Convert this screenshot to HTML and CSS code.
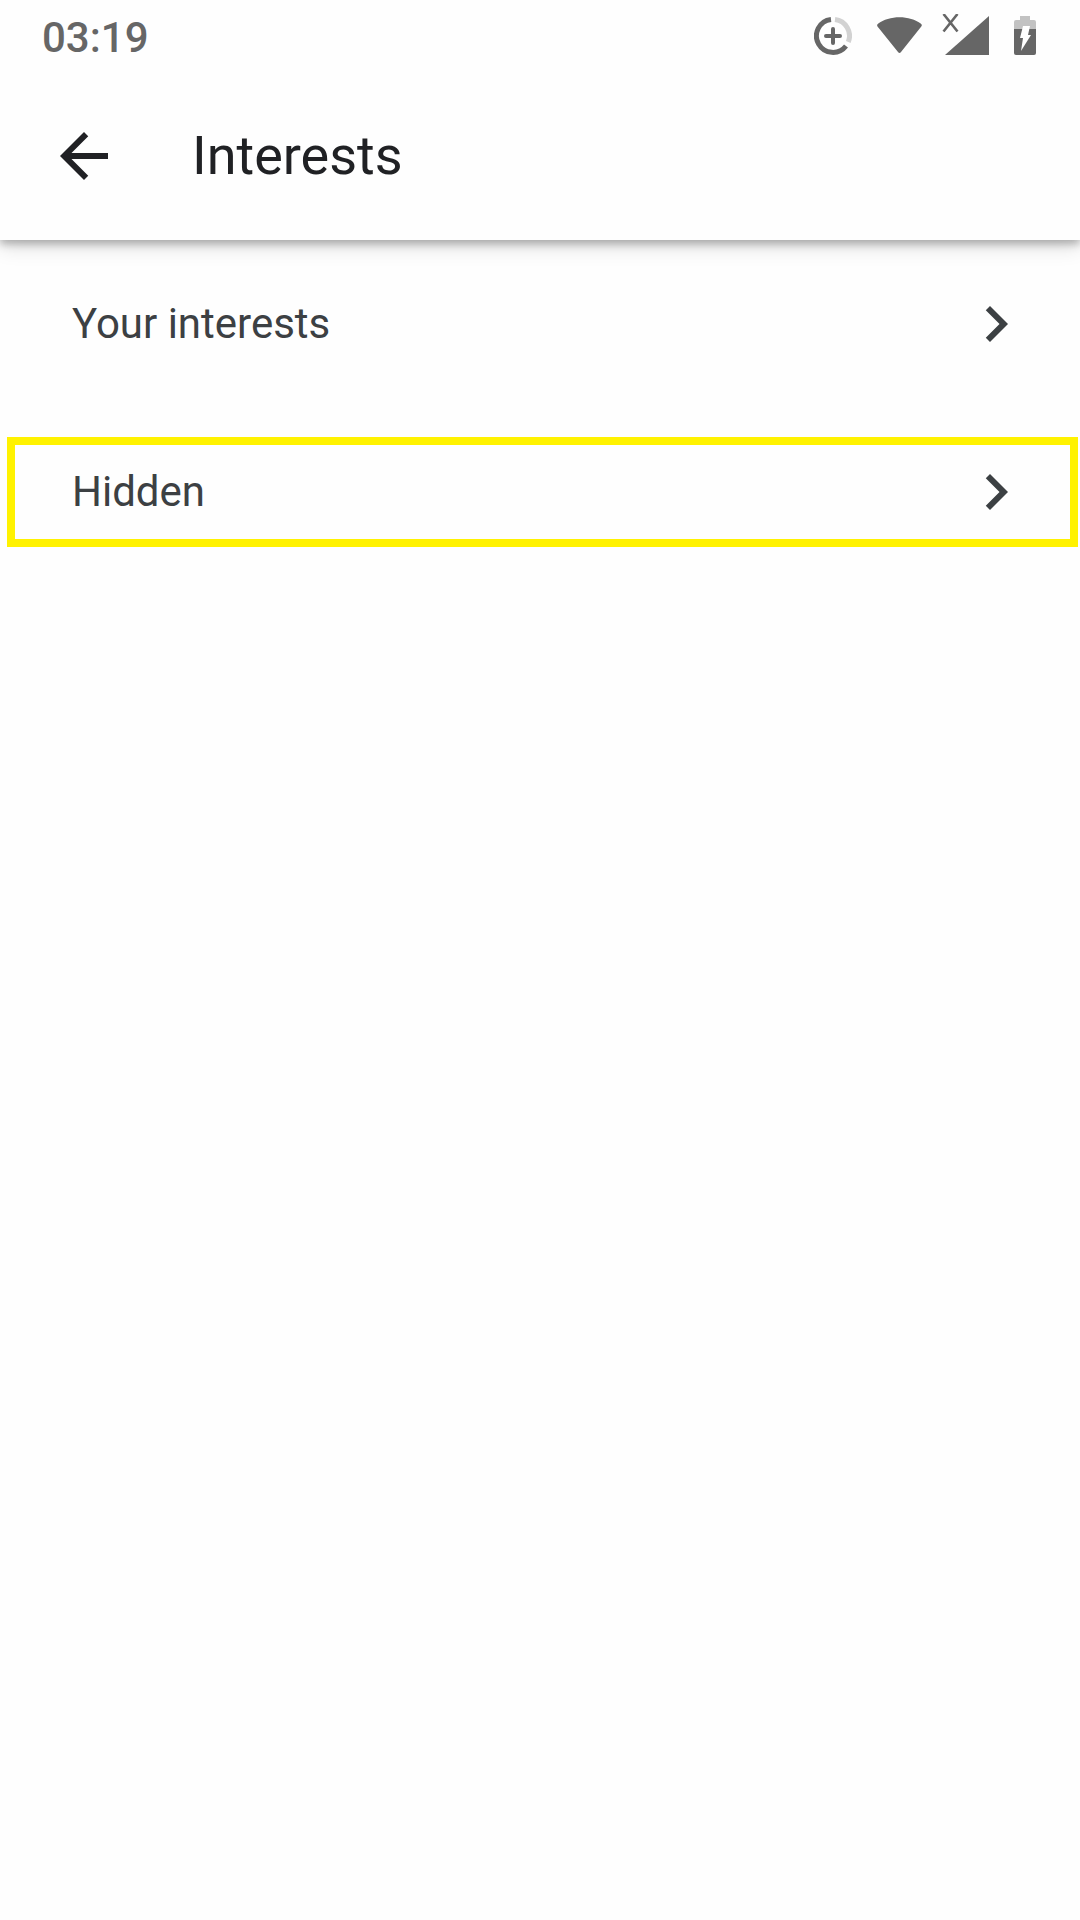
FILE: index.html
```html
<!DOCTYPE html>
<html lang="en">
<head>
<meta charset="utf-8">
<meta name="viewport" content="width=device-width">
<title>Interests</title>
<link rel="stylesheet" href="styles.css">
</head>
<body>
<header class="header">
 <div class="status">
  <span class="time">03:19</span>
  <div class="icons">
   <!-- data saver -->
   <svg width="38" height="44" viewBox="0 0 38 44" fill="none">
    <path d="M21 5.500A16.500 16.500 0 0 1 34.300 28" stroke="#d2d2d2" stroke-width="5"/>
    <path d="M17 5.500A16.500 16.500 0 1 0 32 32" stroke="#666" stroke-width="5"/>
    <path d="M19 15v14M12 22h14" stroke="#666" stroke-width="4" stroke-linecap="round"/>
   </svg>
   <!-- wifi -->
   <svg width="50" height="44" viewBox="0 0 50 44">
    <path d="M5.500 12.500Q4.500 11 6 9.800C17 1 38 1 49 9.800Q50.500 11 49.300 12.500L29 38Q27.500 39.800 26 38Z" fill="#666"/>
   </svg>
   <!-- no signal -->
   <svg width="47" height="44" viewBox="0 0 47 44">
    <path d="M1.500 0 15.500 17.500M15.500 0 1.500 17.500" stroke="#666" stroke-width="2.600"/>
    <path d="M47 2v39H3Z" fill="#666"/>
   </svg>
   <!-- battery -->
   <svg width="27" height="44" viewBox="0 0 27 44">
    <path d="M5 15V8q0-2 2-2h4V2h10v4h4q2 0 2 2v7z" fill="#c2c2c2"/>
    <path d="M5 15h22v24q0 2-2 2H7q-2 0-2-2z" fill="#666"/>
    <path d="M14 12h7l-2 9h3L12 37l2-13h-3z" fill="#fff"/>
   </svg>
  </div>
 </div>
 <div class="toolbar">
  <button type="button" class="back" aria-label="Back">
   <svg class="icon" viewBox="0 0 24 24"><path d="M20 11H7.830l5.590-5.590L12 4l-8 8 8 8 1.410-1.410L7.830 13H20v-2z"/></svg>
  </button>
  <h1 class="title">Interests</h1>
 </div>
</header>
<main class="list">
 <a class="row" href="#interests">
  <span>Your interests</span>
  <svg class="icon" viewBox="0 0 24 24"><path d="M10 6L8.590 7.410 13.170 12l-4.580 4.590L10 18l6-6z"/></svg>
 </a>
 <a class="row marked" href="#hidden">
  <span>Hidden</span>
  <svg class="icon" viewBox="0 0 24 24"><path d="M10 6L8.590 7.410 13.170 12l-4.580 4.590L10 18l6-6z"/></svg>
 </a>
</main>
</body>
</html>
```

FILE: styles.css
```css
* {
 box-sizing: border-box;
}
body {
 margin: 0;
 min-height: 100vh;
 background: #fefefe;
 font-family: Roboto, "Liberation Sans", sans-serif;
 font-size: 42px;
 line-height: 56px;
}
.header {
 position: relative;
 background: #fefefe;
 box-shadow: 0 4px 8px rgba(0, 0, 0, 0.26), 0 6px 20px rgba(0, 0, 0, 0.14);
}
.status {
 display: flex;
 justify-content: space-between;
 align-items: flex-start;
 height: 72px;
 padding: 10px 44px 0 42px;
}
.time {
 color: #666;
 font-weight: 500;
}
.icons {
 display: flex;
 gap: 20px;
 padding-top: 4px;
}
.toolbar {
 display: flex;
 align-items: center;
 gap: 72px;
 height: 168px;
 padding: 0 48px;
}
.back {
 display: flex;
 padding: 0;
 border: 0;
 background: none;
 color: #202124;
 cursor: pointer;
}
.icon {
 width: 72px;
 height: 72px;
 fill: currentColor;
}
.title {
 margin: 0;
 color: #202124;
 font-size: 54px;
 font-weight: 400;
 line-height: 72px;
}
.list {
 display: flex;
 flex-direction: column;
}
.row {
 display: flex;
 justify-content: space-between;
 align-items: center;
 height: 110px;
 margin: 29px 2px 29px 7px;
 padding: 0 38px 0 57px;
 border: 8px solid transparent;
 color: #3c4043;
 text-decoration: none;
}
.marked {
 border-color: #fff200;
}
```
